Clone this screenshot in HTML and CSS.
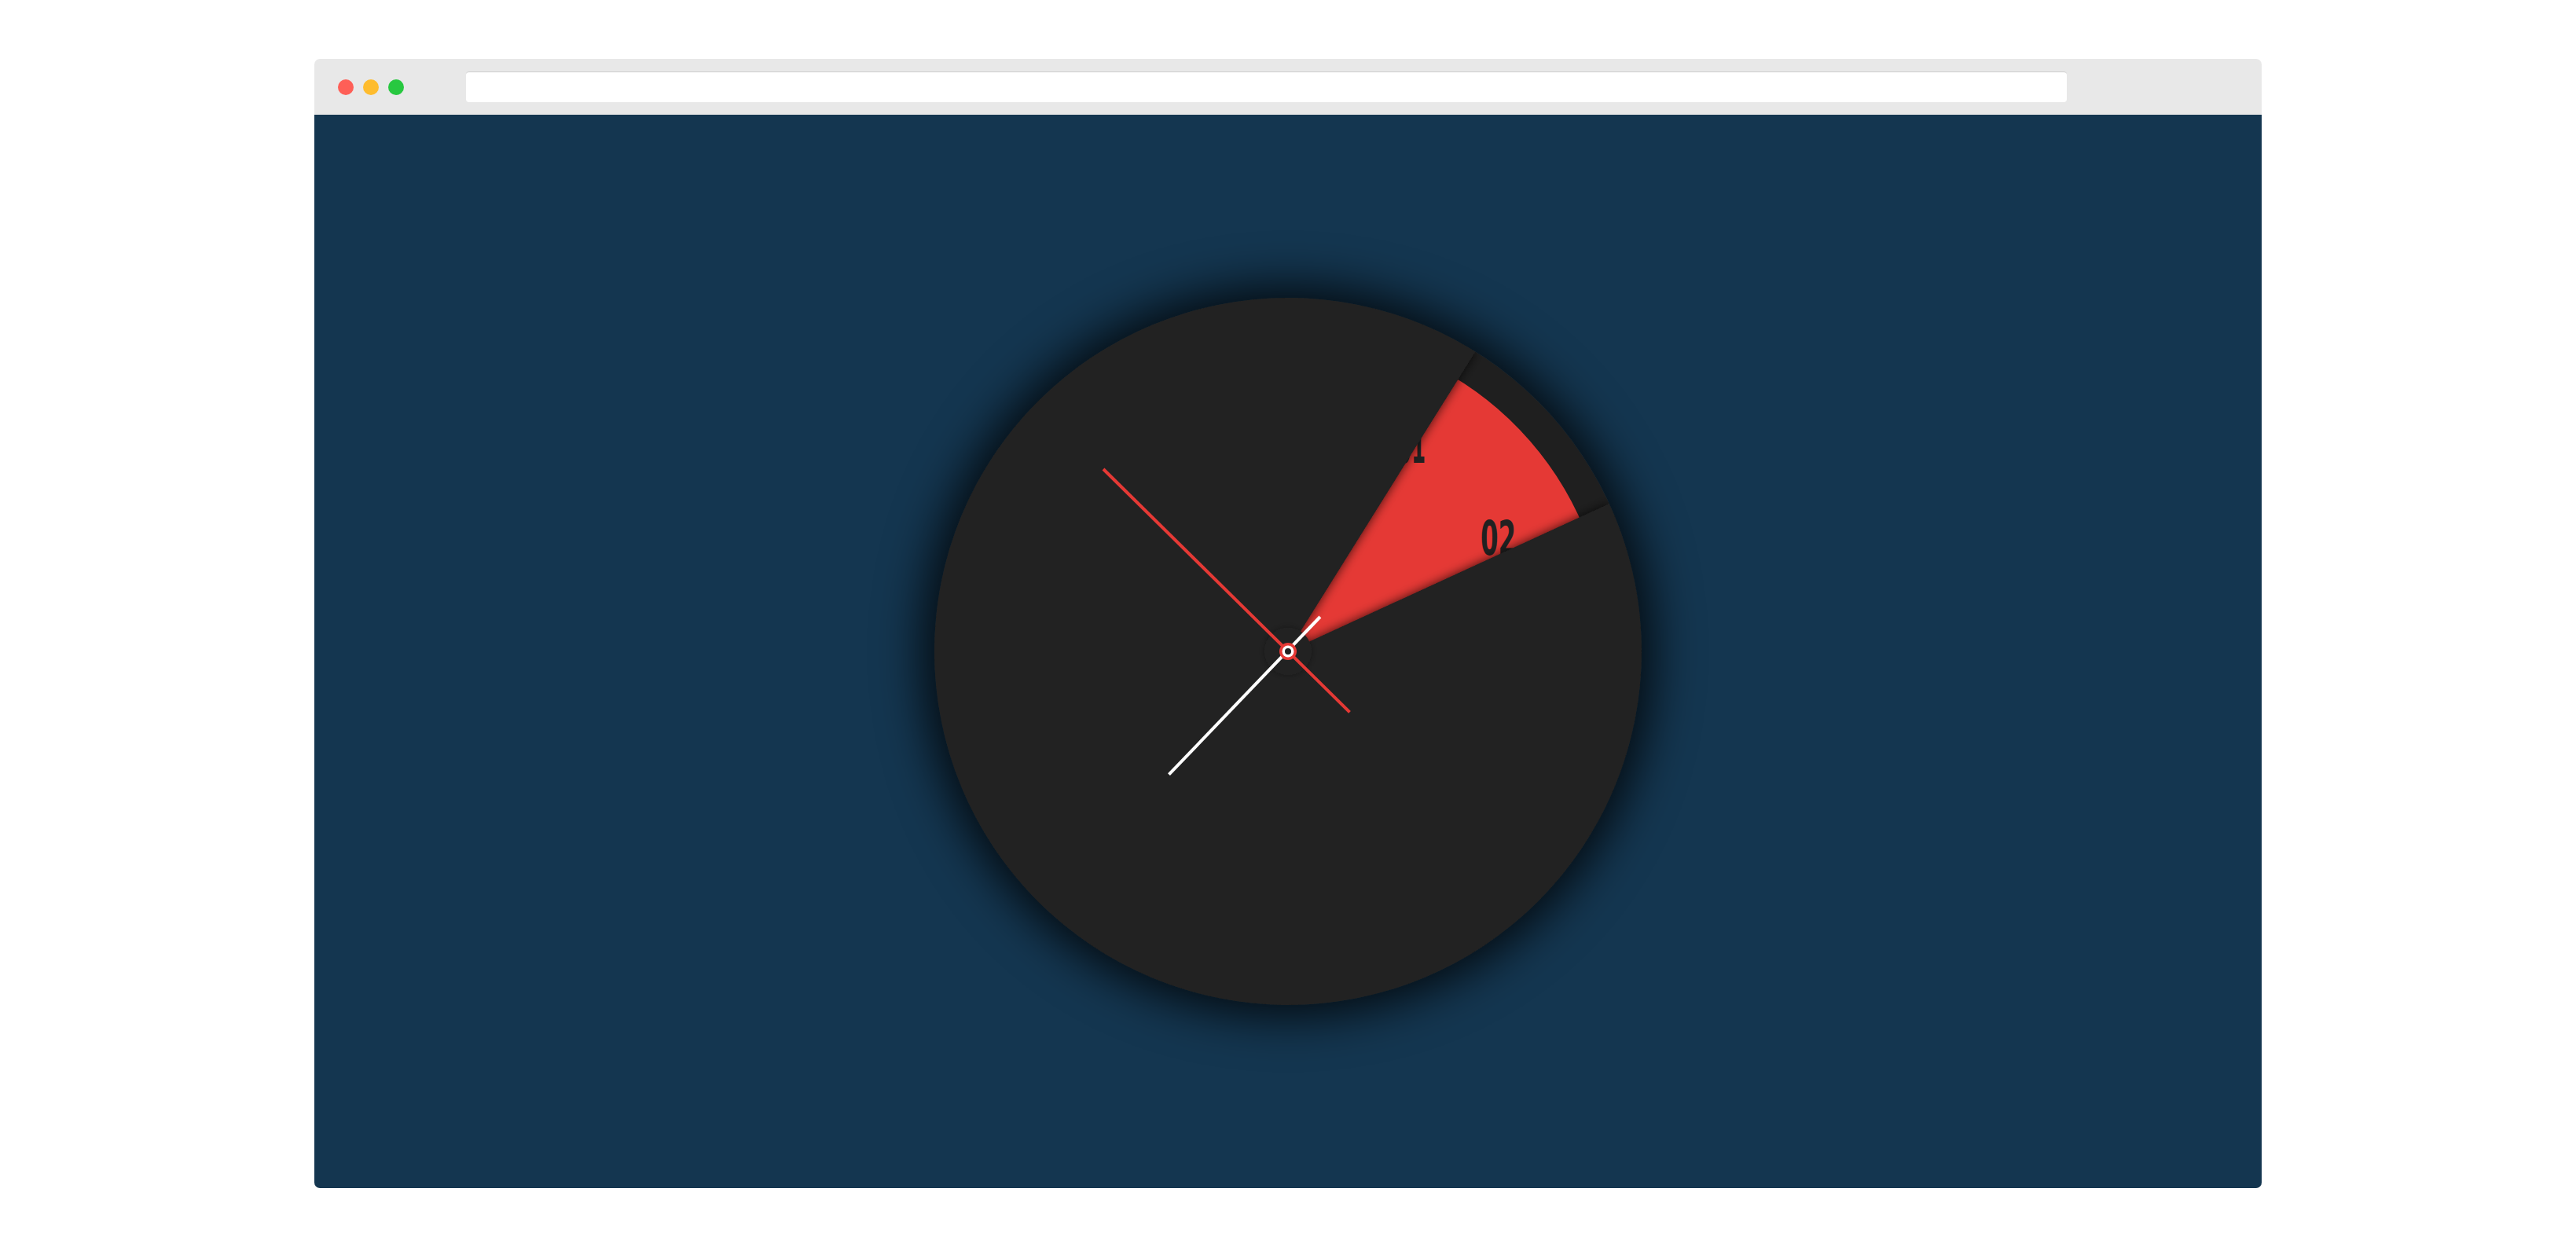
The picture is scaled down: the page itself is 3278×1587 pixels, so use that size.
FILE: index.html
```html
<!DOCTYPE html>
<html lang="en">
<head>
<meta charset="utf-8">
<title>Clock</title>
<link rel="stylesheet" href="styles.css">
</head>
<body>
<div class="page">
  <div class="window">
    <div class="titlebar">
      <div class="dots">
        <span class="dot dot-red"></span>
        <span class="dot dot-yellow"></span>
        <span class="dot dot-green"></span>
      </div>
      <div class="url"></div>
    </div>
    <div class="content">
      <div class="clock">
        <svg class="face" viewBox="-450 -450 900 900" width="900" height="900">
          <defs>
            <filter id="coverShadow" x="-20%" y="-20%" width="140%" height="140%">
              <feDropShadow dx="0" dy="0" stdDeviation="7" flood-color="#000" flood-opacity="0.75"/>
            </filter>
            <filter id="hubShadow" x="-50%" y="-50%" width="200%" height="200%">
              <feDropShadow dx="0" dy="0" stdDeviation="4" flood-color="#000" flood-opacity="0.35"/>
            </filter>
            <clipPath id="disc">
              <circle cx="0" cy="0" r="450"/>
            </clipPath>
          </defs>
          <circle class="base" cx="0" cy="0" r="450"/>
          <path class="wedge" d="M0,0 L191.6,-360.3 A408 408 0 0 1 383.4,-139.5 Z"/>
          <text class="num" x="157" y="-240" text-anchor="middle" textLength="36" lengthAdjust="spacingAndGlyphs">01</text>
          <text class="num" x="267.5" y="-123" text-anchor="middle" textLength="45" lengthAdjust="spacingAndGlyphs">02</text>
          <g clip-path="url(#disc)">
            <path class="cover" filter="url(#coverShadow)" d="M0,0 L408.8,-188.0 A450 450 0 1 1 238.5,-381.6 Z"/>
          </g>
          <circle class="hub" cx="0" cy="0" r="30" filter="url(#hubShadow)"/>
          <line class="hand hand-white" x1="-151.5" y1="156.7" x2="40.9" y2="-44"/>
          <line class="hand hand-red" x1="-235" y1="-232" x2="78.5" y2="77.3"/>
          <circle class="cap-red" cx="0" cy="0" r="11"/>
          <circle class="cap-white" cx="0" cy="0" r="7.5"/>
          <circle class="cap-dark" cx="0" cy="0" r="4"/>
        </svg>
      </div>
    </div>
  </div>
</div>
</body>
</html>
```

FILE: styles.css
```css
html, body {
  margin: 0;
  padding: 0;
  background: #ffffff;
  font-family: "DejaVu Sans", "Liberation Sans", sans-serif;
}

.page {
  box-sizing: border-box;
  height: 100vh;
  padding: 75px 400px;
  display: flex;
}

.window {
  flex: 1;
  display: flex;
  flex-direction: column;
  border-radius: 7px;
  overflow: hidden;
}

.titlebar {
  height: 71px;
  flex: none;
  background: #e8e8e8;
  display: flex;
  align-items: center;
  padding-left: 30px;
}

.dots {
  display: flex;
  gap: 12px;
}

.dot {
  width: 20px;
  height: 20px;
  border-radius: 50%;
  display: block;
}

.dot-red { background: #fe5f57; }
.dot-yellow { background: #febc2e; }
.dot-green { background: #28c840; }

.url {
  box-sizing: border-box;
  margin-left: 79px;
  width: 2037px;
  height: 39px;
  background: #ffffff;
  border-top: 1px solid #cccccc;
  border-radius: 4px;
}

.content {
  flex: 1;
  background: #143650;
  display: flex;
  align-items: center;
  justify-content: center;
}

.clock {
  width: 900px;
  height: 900px;
  border-radius: 50%;
  box-shadow: 0 0 60px 15px rgba(0, 0, 0, 0.8);
}

.face {
  display: block;
  overflow: visible;
}

.base { fill: #1f1f1f; }
.wedge { fill: #e53935; }
.cover { fill: #212121; }
.hub { fill: #242424; }

.num {
  fill: #212121;
  font-family: "DejaVu Sans", "Liberation Sans", sans-serif;
  font-weight: bold;
  font-size: 60px;
}

.hand {
  stroke-width: 4;
  stroke-linecap: butt;
}

.hand-white { stroke: #ffffff; }
.hand-red { stroke: #e53935; }

.cap-red { fill: #e53935; }
.cap-white { fill: #ffffff; }
.cap-dark { fill: #212121; }
```
